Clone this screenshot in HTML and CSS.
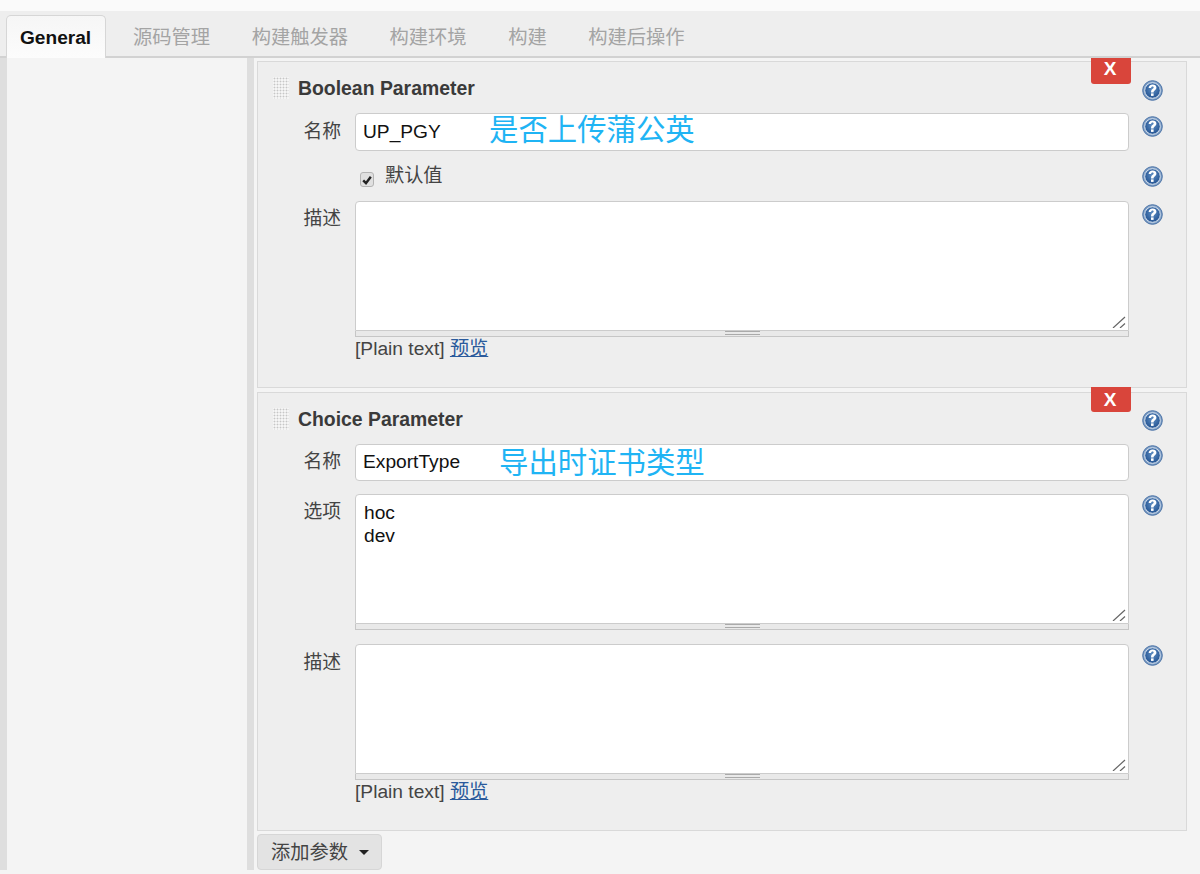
FILE: index.html
```html
<!DOCTYPE html>
<html lang="zh">
<head>
<meta charset="utf-8">
<title>General</title>
<link rel="stylesheet" href="styles.css">
</head>
<body>
<svg class="defs" width="0" height="0" aria-hidden="true">
  <defs>
    <radialGradient id="helpFill" cx="50%" cy="42%" r="60%">
      <stop offset="0" stop-color="#5f8fc4"/>
      <stop offset="1" stop-color="#1f4f8f"/>
    </radialGradient>
    <symbol id="help" viewBox="0 0 21 21">
      <circle cx="10.5" cy="10.5" r="9.8" fill="#7f9fc6" stroke="#4a72a6" stroke-width="1"/>
      <circle cx="10.5" cy="10.5" r="7.8" fill="url(#helpFill)" stroke="#dbe5f1" stroke-width="1"/>
      <path d="M6.600 8c.2-2.300 1.800-3.500 4-3.500 2.200 0 3.800 1.200 3.800 3.100 0 1.400-.8 2.100-1.700 2.800-.9.700-1.100 1-1.100 2H9c0-1.800.5-2.500 1.500-3.300.7-.5 1.200-.9 1.200-1.500 0-.7-.5-1.100-1.200-1.100-.8 0-1.300.5-1.400 1.500z" fill="#fff"/>
      <rect x="9" y="13.400" width="2.600" height="2.500" fill="#fff"/>
    </symbol>
    <symbol id="resize" viewBox="0 0 14 12">
      <path d="M1 12 13 1M8 12l5-4.500" fill="none" stroke="#666" stroke-width="1.200"/>
    </symbol>
  </defs>
</svg>

<div class="topstrip"></div>
<nav class="tabs">
  <a class="tab tab-active">General</a>
  <a class="tab">源码管理</a>
  <a class="tab">构建触发器</a>
  <a class="tab">构建环境</a>
  <a class="tab">构建</a>
  <a class="tab">构建后操作</a>
</nav>

<div class="layout">
  <aside class="side"></aside>
  <main class="main">

    <section class="panel panel-bool">
      <button class="delete delete-first">X</button>
      <div class="head">
        <span class="handle"></span>
        <h2 class="title">Boolean Parameter</h2>
        <svg class="help help-head-a"><use href="#help"/></svg>
      </div>
      <div class="row">
        <label class="label label-name">名称</label>
        <div class="field"><input class="text text-tall" value="UP_PGY"><span class="note note-a">是否上传蒲公英</span></div>
        <svg class="help help-m4"><use href="#help"/></svg>
      </div>
      <div class="row row-check">
        <div></div>
        <div class="field check-field">
          <span class="check"><svg viewBox="0 0 12 12" width="12" height="12"><path d="M2.200 6.300 5 9.200 9.800 2.800" fill="none" stroke="#222" stroke-width="2.400"/></svg></span>
          <span class="check-text">默认值</span>
        </div>
        <svg class="help help-m16"><use href="#help"/></svg>
      </div>
      <div class="row">
        <label class="label label-area">描述</label>
        <div class="field">
          <div class="area-wrap"><textarea class="area"></textarea><svg class="resize"><use href="#resize"/></svg></div>
          <div class="grip"><span></span></div>
          <div class="plain">[Plain text] <a class="preview">预览</a></div>
        </div>
        <svg class="help help-m3"><use href="#help"/></svg>
      </div>
    </section>

    <section class="panel panel-choice">
      <button class="delete delete-second">X</button>
      <div class="head">
        <span class="handle"></span>
        <h2 class="title">Choice Parameter</h2>
        <svg class="help help-head-b"><use href="#help"/></svg>
      </div>
      <div class="row row-gap13">
        <label class="label label-name-b">名称</label>
        <div class="field"><input class="text text-short" value="ExportType"><span class="note note-b">导出时证书类型</span></div>
        <svg class="help help-m2"><use href="#help"/></svg>
      </div>
      <div class="row row-gap14">
        <label class="label label-opt">选项</label>
        <div class="field">
          <div class="area-wrap"><textarea class="area">hoc
dev</textarea><svg class="resize"><use href="#resize"/></svg></div>
          <div class="grip"><span></span></div>
        </div>
        <svg class="help help-m2"><use href="#help"/></svg>
      </div>
      <div class="row">
        <label class="label label-area-b">描述</label>
        <div class="field">
          <div class="area-wrap"><textarea class="area"></textarea><svg class="resize"><use href="#resize"/></svg></div>
          <div class="grip"><span></span></div>
          <div class="plain">[Plain text] <a class="preview">预览</a></div>
        </div>
        <svg class="help help-m2"><use href="#help"/></svg>
      </div>
    </section>

    <button class="add"><span class="add-text">添加参数</span><i class="caret"></i></button>
  </main>
</div>
</body>
</html>
```

FILE: styles.css
```css
* { box-sizing: border-box; }
html, body { margin: 0; padding: 0; height: 874px; overflow: hidden; }
body {
  background: #f4f4f4;
  color: #333;
  font-family: "Liberation Sans", "Noto Sans CJK SC", sans-serif;
  font-size: 19.2px;
}
.defs { position: absolute; }

.topstrip { height: 11px; background: #fafafa; }
.tabs {
  height: 47px;
  background: #eee;
  border-bottom: 2px solid #d2d2d2;
  padding: 4px 0 0 6px;
  display: flex;
  gap: 12.5px;
}
.tab {
  height: 43px;
  padding: 0 13.5px;
  border: 1px solid transparent;
  border-bottom: 0;
  line-height: 43px;
  color: #a4a4a4;
  font-size: 19.3px;
  white-space: nowrap;
}
.tab-active {
  font-size: 19.1px;
  font-weight: 700;
  color: #111;
  background: linear-gradient(#f6f6f6, #fcfcfc);
  border-color: #d6d6d6;
  border-radius: 5px 5px 0 0;
  width: 100px;
  padding-left: 13px;
}

.layout { display: flex; height: 812px; }
.side {
  width: 247px;
  height: 812px;
  background: #f4f4f4;
  border-left: 7px solid #dedede;
}
.main {
  width: 953px;
  height: 812px;
  border-left: 7px solid #dedede;
  padding: 3px 13px 0 3px;
}

.panel {
  position: relative;
  background: #eee;
  border: 1px solid #d9d9d9;
}
.panel-bool { height: 327px; margin-bottom: 4px; }
.panel-choice { height: 439px; margin-bottom: 3px; }

.delete {
  position: absolute;
  right: 55px;
  width: 40px;
  padding: 0 2px 0 0;
  border: 0;
  border-radius: 0 0 3px 3px;
  background: #d9453b;
  color: #fff;
  font: 700 19px "Liberation Sans", sans-serif;
}
.delete-first { top: -4px; height: 26px; padding-bottom: 4px; }
.delete-second { top: -6px; height: 25px; }

.head { height: 51px; display: flex; align-items: center; position: relative; padding-left: 15px; }
.handle {
  width: 16px;
  height: 22px;
  margin-right: 9px;
  background-color: #f5f5f5;
  background-image: radial-gradient(circle, #c6c6c6 0 .8px, transparent 1.1px);
  background-size: 3px 3px;
}
.title { margin: 2px 0 0; font-size: 19.4px; font-weight: 700; color: #3a3a3a; }

.help { width: 21px; height: 21px; display: block; margin-left: 13px; }
.head .help { position: absolute; left: 884px; margin: 0; }
.help-head-a { top: 18px; }
.help-head-b { top: 16.5px; }
.help-m2 { margin-top: 1px; }
.help-m3 { margin-top: 3px; }
.help-m4 { margin-top: 3px; }
.help-m16 { margin-top: 15px; }

.row { display: grid; grid-template-columns: 97px 774px 1fr; align-items: start; }
.row-check { height: 50px; }
.row-gap13 { margin-bottom: 13px; }
.row-gap14 { margin-bottom: 14px; }

.label { display: block; padding-right: 14px; text-align: right; line-height: 24px; color: #444; font-size: 18.8px; }
.label-name { padding-top: 7px; }
.label-name-b { padding-top: 6px; }
.label-area { padding-top: 6px; }
.label-area-b { padding-top: 7px; }
.label-opt { padding-top: 6px; }

.field { position: relative; min-width: 0; }
.text {
  display: block;
  width: 774px;
  height: 37px;
  padding: 0 7px;
  border: 1px solid #ccc;
  border-radius: 4px;
  background: #fff;
  color: #111;
  font: 19.2px "Liberation Sans", sans-serif;
}
.text-tall { height: 38px; }
.text-short { padding-bottom: 2px; }
.note {
  position: absolute;
  top: -1px;
  color: #1fb4f4;
  font-size: 29.4px;
  line-height: 36px;
  white-space: nowrap;
}
.note-a { left: 134px; }
.note-b { left: 144px; top: 1px; }

.check-field { display: block; height: 50px; }
.check {
  position: absolute;
  left: 5px;
  top: 21px;
  width: 14px;
  height: 15px;
  border: 1px solid #b4b4b4;
  border-radius: 3px;
  background: #e0e0e0;
  display: flex;
  align-items: center;
  justify-content: center;
}
.check-text { position: absolute; left: 30px; top: 12px; line-height: 26px; color: #444; }

.area-wrap { position: relative; height: 130px; }
.area {
  display: block;
  width: 774px;
  height: 130px;
  padding: 7px 8px;
  resize: none;
  border: 1px solid #ccc;
  border-radius: 4px 4px 0 0;
  background: #fff;
  color: #111;
  font: 19.2px/22.5px "Liberation Sans", sans-serif;
  overflow: hidden;
}
.resize { position: absolute; right: 3px; bottom: 3px; width: 14px; height: 12px; }
.grip {
  height: 6px;
  background: #e9e9e9;
  border: 1px solid #c6c6c6;
  border-top: 0;
  display: flex;
  justify-content: center;
}
.grip span {
  width: 35px;
  height: 4px;
  border-top: 1px solid #aaa;
  border-bottom: 1px solid #aaa;
}
.plain { line-height: 23px; color: #444; white-space: nowrap; }
.preview { color: #2a5a9c; text-decoration: underline; }

.add {
  display: flex;
  align-items: center;
  width: 125px;
  height: 36px;
  padding: 0 0 0 13px;
  background: #e3e3e3;
  border: 1px solid #d6d6d6;
  border-radius: 4px;
  color: #444;
  font: 19.3px "Liberation Sans", "Noto Sans CJK SC", sans-serif;
}
.add-text { margin-top: -2px; }
.caret {
  width: 0;
  height: 0;
  margin-left: 11px;
  border-left: 5px solid transparent;
  border-right: 5px solid transparent;
  border-top: 5px solid #222;
}
```
